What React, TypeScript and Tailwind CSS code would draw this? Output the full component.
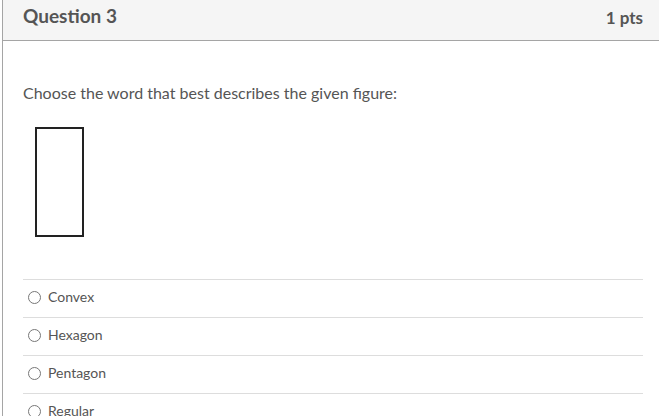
import React from 'react';

const answers = ['Convex', 'Hexagon', 'Pentagon', 'Regular'];

export default function App() {
  return (
    <div className="h-[416px] w-[659px] overflow-hidden bg-white" style={{ fontFamily: 'Lato, "Open Sans", sans-serif' }}>
      <div className="ml-[2px] border-l border-[#a5a5a5]">
        <div className="flex h-[41px] items-center justify-between border-b border-[#a5a5a5] bg-[#f5f5f5] pb-[8px] pl-[20px] pr-[16px]">
          <h2 className="text-[19px] font-bold text-[#555555]">Question 3</h2>
          <span className="mt-[4px] text-[17px] font-bold text-[#555555]">1 pts</span>
        </div>
        <div className="pl-[20px] pr-[16px] pt-[42px]">
          <p className="text-[16px] leading-[20px] text-[#555555]">Choose the word that best describes the given figure:</p>
          <div className="mt-[24px] pl-[12px]">
            <Figure />
          </div>
          <div className="mt-[40px]">
            {answers.map((a) => (
              <AnswerRow key={a} label={a} />
            ))}
          </div>
        </div>
      </div>
    </div>
  );
}

function Figure() {
  return (
    <svg width="50" height="112" viewBox="0 0 50 112">
      <rect x="1" y="1" width="47" height="108" fill="none" stroke="#222" strokeWidth="2" />
    </svg>
  );
}

function AnswerRow({ label }: { label: string }) {
  return (
    <div className="flex h-[38px] items-center border-t border-[#dddddd] pb-[5px] pl-[5px]">
      <span className="mt-[2px] h-[13px] w-[13px] rounded-full border border-[#777777] bg-white" />
      <span className="ml-[7px] text-[14px] text-[#555555]">{label}</span>
    </div>
  );
}
